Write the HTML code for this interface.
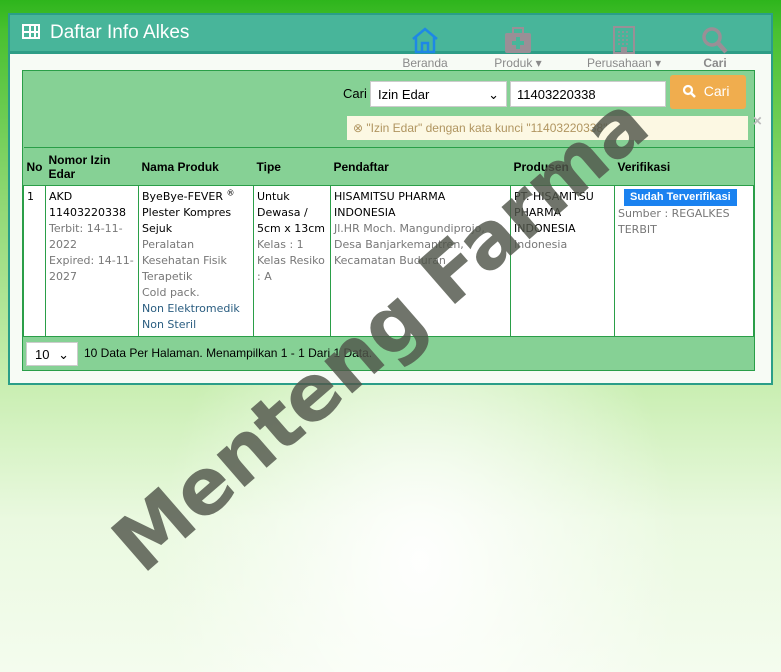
<!DOCTYPE html>
<html><head><meta charset="utf-8"><style>
*{margin:0;padding:0;box-sizing:border-box}
body{width:781px;height:672px;overflow:hidden;position:relative;font-family:"DejaVu Sans",sans-serif;
background:linear-gradient(180deg,#2eb51c 0px,#48c030 30px,#8fd873 200px,#c8eeb0 380px,#eaf9e0 520px,#f4fcee 672px);}
.glow{position:absolute;left:0;top:0;width:781px;height:672px;background:radial-gradient(ellipse 260px 330px at 420px 560px,rgba(255,255,255,.95),rgba(255,255,255,0) 100%);}
.panel{position:absolute;left:8px;top:13px;width:765px;height:372px;background:#f7fbf5;border:2px solid #2b9e88;}
.hdr{height:39px;background:#48b59a;border-bottom:3px solid #2e9d86;color:#fff;font-family:"Liberation Sans",sans-serif;font-size:19px;padding:7px 0 0 12px}
.nav{position:absolute;top:11px;font-family:"Liberation Sans",sans-serif;font-size:12px;color:#8a8a8a;text-align:center;line-height:13px}
.box{position:absolute;left:12px;top:55px;width:733px;height:301px;background:#86d195;border:1px solid #2a9e48}
.lbl{position:absolute;left:320px;top:15px;font-family:"Liberation Sans",sans-serif;font-size:13px}
.sel{position:absolute;left:347px;top:10px;width:137px;height:26px;background:#fff;font-family:"Liberation Sans",sans-serif;font-size:13px;padding:5px 7px;border:1px solid #ccc}
.inp{position:absolute;left:487px;top:10px;width:156px;height:26px;background:#fff;font-family:"Liberation Sans",sans-serif;font-size:13px;padding:5px 6px;border:1px solid #ccc}
.btn{position:absolute;left:647px;top:4px;width:76px;height:34px;background:#f0ad4e;border-radius:3px;color:#fff;font-family:"Liberation Sans",sans-serif;font-size:14px;padding:8px 0 0 12px}
.alert{position:absolute;left:324px;top:45px;width:401px;height:24px;background:#fcf8e3;color:#b09560;font-family:"Liberation Sans",sans-serif;font-size:12px;padding:5px 6px}
table{position:absolute;left:0;top:76px;width:731px;border-collapse:collapse;font-size:11px}
th{font-family:"Liberation Sans",sans-serif;font-size:12px;text-align:left;font-weight:bold;height:38px;padding:0 3px;border-top:1px solid #2a9e48;line-height:14px}
td{background:#fff;vertical-align:top;padding:3px 3px;line-height:16px;height:150px;border:1px solid #2a9e48}
.g{color:#777}.b{color:#2a5d80}
.badge{display:inline-block;background:#1a82f0;color:#fff;font-family:"Liberation Sans",sans-serif;font-weight:bold;font-size:11px;padding:1px 6px;margin-left:6px;line-height:15px}
.foot{position:absolute;left:0;top:265px;width:731px;height:34px;border-top:1px solid #2a9e48;font-family:"Liberation Sans",sans-serif;font-size:12px;background:#86d195}
.wm{position:absolute;font-family:"DejaVu Sans",sans-serif;font-weight:bold;font-size:78px;color:rgba(80,85,75,.82);transform:rotate(-41deg);transform-origin:0 0;white-space:nowrap;letter-spacing:-1px;top:522px;left:96px}
</style></head><body>
<div class="glow"></div>
<div class="panel">
<div class="hdr"><span style="display:inline-block;width:18px;height:15px;border:2px solid #fff;background:linear-gradient(90deg,transparent 5px,#fff 5px,#fff 7px,transparent 7px,transparent 10px,#fff 10px,#fff 12px,transparent 12px),linear-gradient(0deg,transparent 4px,#fff 4px,#fff 6px,transparent 6px);vertical-align:-1px;margin-right:10px"></span>Daftar Info Alkes</div>
<div class="nav" style="left:388px;width:54px"><svg width="30" height="28" viewBox="0 0 30 28"><path d="M3 13 L15 3 L27 13 M6 11 V26 H24 V11 M12 26 V17 H18 V26" fill="none" stroke="#1e88e5" stroke-width="2.5"/></svg><div>Beranda</div></div>
<div class="nav" style="left:478px;width:60px"><svg width="30" height="28" viewBox="0 0 30 28"><rect x="2" y="7" width="26" height="20" rx="2" fill="#9a8f96"/><rect x="10" y="2" width="10" height="6" fill="none" stroke="#9a8f96" stroke-width="2"/><path d="M15 11V23M9 17H21" stroke="#48b59a" stroke-width="4"/></svg><div>Produk ▾</div></div>
<div class="nav" style="left:572px;width:84px"><svg width="24" height="28" viewBox="0 0 24 28"><rect x="2" y="1" width="20" height="26" fill="none" stroke="#9a8f96" stroke-width="2"/><path d="M6 6h12M6 10h12M6 14h12M6 18h12" stroke="#9a8f96" stroke-width="1.5" stroke-dasharray="2 2"/><rect x="9" y="21" width="6" height="6" fill="#9a8f96"/></svg><div>Perusahaan ▾</div></div>
<div class="nav" style="left:688px;width:34px"><svg width="30" height="28" viewBox="0 0 30 28"><circle cx="12" cy="11" r="8" fill="none" stroke="#9a8f96" stroke-width="3.5"/><path d="M18 17 L26 26" stroke="#9a8f96" stroke-width="4.5"/></svg><div style="font-weight:bold">Cari</div></div>
<div class="box">
<div class="lbl">Cari</div>
<div class="sel">Izin Edar<span style="float:right">⌄</span></div>
<div class="inp">11403220338</div>
<div class="btn"><svg width="14" height="14" viewBox="0 0 14 14" style="vertical-align:-2px"><circle cx="6" cy="6" r="4" fill="none" stroke="#fff" stroke-width="2.2"/><path d="M9 9L13 13" stroke="#fff" stroke-width="2.5"/></svg> &nbsp;Cari</div>
<div class="alert">⊗ "Izin Edar" dengan kata kunci "11403220338"<span style="position:absolute;right:-14px;top:-3px;color:#bbb;font-size:16px;font-weight:bold">×</span></div>
<table>
<tr><th style="width:22px">No</th><th style="width:93px">Nomor Izin Edar</th><th style="width:115px">Nama Produk</th><th style="width:77px">Tipe</th><th style="width:180px">Pendaftar</th><th style="width:104px">Produsen</th><th>Verifikasi</th></tr>
<tr><td>1</td><td>AKD<br>11403220338<br><span class="g">Terbit: 14-11-2022<br>Expired: 14-11-2027</span></td>
<td>ByeBye-FEVER <sup style="font-size:8px;line-height:0">®</sup><br>Plester Kompres Sejuk<br><span class="g">Peralatan Kesehatan Fisik Terapetik<br>Cold pack.</span><br><span class="b">Non Elektromedik<br>Non Steril</span></td>
<td>Untuk Dewasa / 5cm x 13cm<br><span class="g">Kelas : 1<br>Kelas Resiko : A</span></td>
<td>HISAMITSU PHARMA INDONESIA<br><span class="g">Jl.HR Moch. Mangundiprojo, Desa Banjarkemantren, Kecamatan Buduran</span></td>
<td>PT. HISAMITSU PHARMA INDONESIA<br><span class="g">Indonesia</span></td>
<td><span class="badge">Sudah Terverifikasi</span><br><span class="g">Sumber : REGALKES TERBIT</span></td></tr>
</table>
<div class="foot"><div style="position:absolute;left:3px;top:5px;width:52px;height:24px;background:#fff;border:1px solid #ccc;padding:4px 8px;font-size:13px">10 <span style="float:right">⌄</span></div><div style="position:absolute;left:61px;top:9px">10 Data Per Halaman. Menampilkan 1 - 1 Dari 1 Data.</div></div>
</div>
</div>
<div class="wm">Menteng Farma</div>
</body></html>
